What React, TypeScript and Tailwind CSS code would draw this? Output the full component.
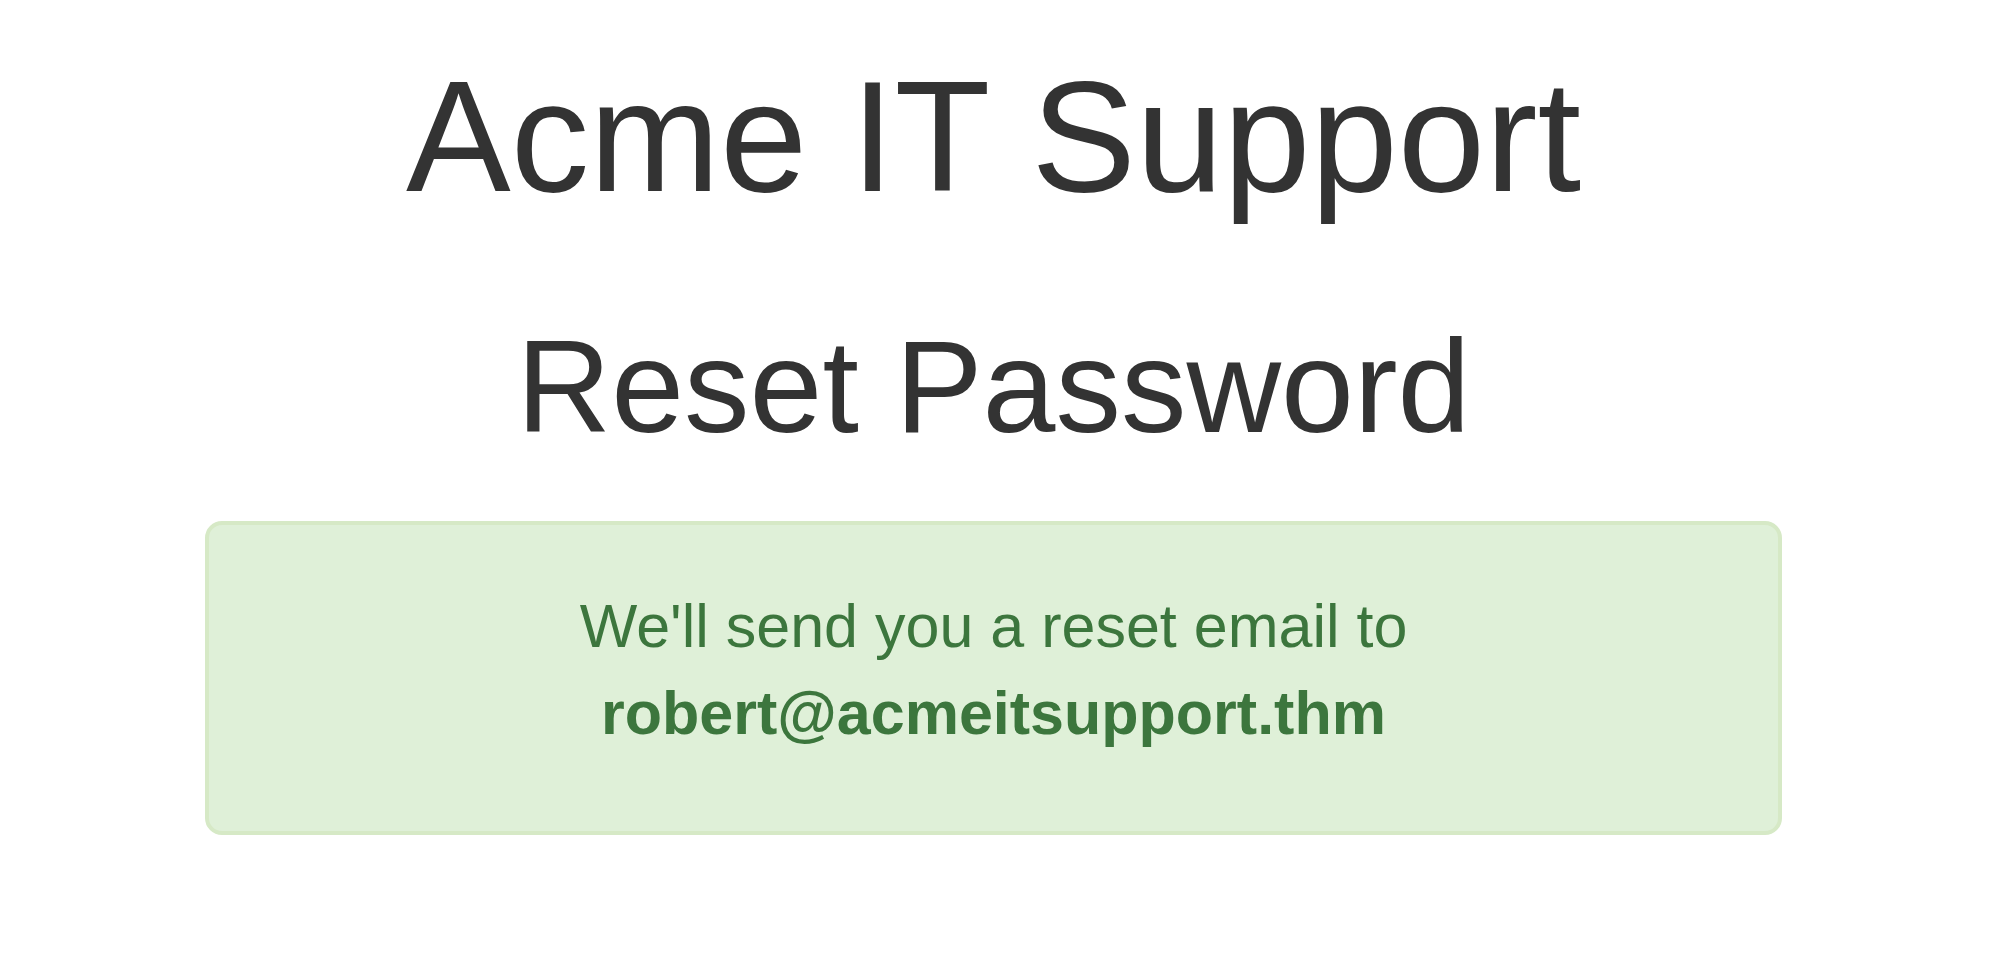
export default function App() {
  return (
    <div className="min-h-screen bg-white pr-[13px] font-['Liberation_Sans',Arial,sans-serif] text-center">
      <h1 className="pt-[51px] text-[157px] leading-[172px] font-normal text-[#333333]">
        Acme IT Support
      </h1>
      <h2 className="mt-[92px] text-[131px] leading-[144px] font-normal text-[#333333]">
        Reset Password
      </h2>
      <div className="mx-auto mt-[62px] w-[1577px] rounded-[17px] border-4 border-[#d6e9c6] bg-[#dff0d8] px-[65px] pt-[58px] pb-[74px] text-[61px] leading-[87px] text-[#3c763d]">
        We'll send you a reset email to <strong className="font-bold">robert@acmeitsupport.thm</strong>
      </div>
    </div>
  );
}
